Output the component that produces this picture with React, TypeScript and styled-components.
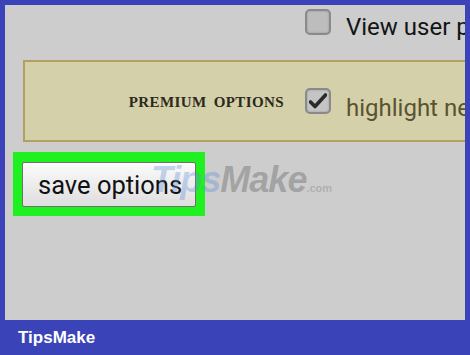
import styled, { createGlobalStyle } from 'styled-components';

const GlobalStyle = createGlobalStyle`
  html, body {
    margin: 0;
    padding: 0;
  }
  body {
    font-family: Roboto, 'Liberation Sans', sans-serif;
  }
`;

const Frame = styled.div`
  width: 470px;
  height: 355px;
  background: #3a44b8;
  display: flex;
  flex-direction: column;
  overflow: hidden;
`;

const Panel = styled.div`
  position: relative;
  margin: 5px 5px 0;
  height: 315px;
  background: #cdcdcd;
  overflow: hidden;
  display: flex;
  flex-direction: column;
`;

const OptionRow = styled.div`
  display: grid;
  grid-template-columns: 285px 26px auto;
  grid-template-rows: 34px;
  column-gap: 15px;
  align-items: center;
  white-space: nowrap;
`;

const Check = styled.span<{ $checked?: boolean }>`
  box-sizing: border-box;
  width: 26px;
  height: 26px;
  border: 2px solid #8a8a8a;
  border-radius: 5px;
  background: ${(p) => (p.$checked ? '#c4c4c4' : '#bdbdbd')};
  box-shadow: inset 0 0 2px rgba(0, 0, 0, 0.25);
  display: flex;
  align-items: center;
  justify-content: center;
`;

const OptionLabel = styled.span<{ $tone?: string; $drop?: number }>`
  font-size: 24px;
  color: ${(p) => p.$tone || '#141414'};
  line-height: 32px;
  padding-top: ${(p) => p.$drop ?? 0}px;
`;

const PremiumBox = styled.div`
  margin: 21px 0 0 18px;
  height: 82px;
  box-sizing: border-box;
  border: 2px solid #b59f5e;
  border-right: none;
  background: #d4d0a9;
  display: grid;
  grid-template-columns: 265px 26px auto;
  column-gap: 15px;
  align-items: center;
  white-space: nowrap;
`;

const PremiumTitle = styled.span`
  justify-self: end;
  padding: 2px 6px 0 0;
  font-family: 'Liberation Serif', 'DejaVu Serif', serif;
  font-weight: bold;
  font-size: 15px;
  letter-spacing: 0.4px;
  word-spacing: 3px;
  color: #2b2a1c;
`;

const SaveArea = styled.div`
  margin: 10px 0 0 8px;
  align-self: flex-start;
  padding: 10px 9px 9px;
  background: #1ff01f;
`;

const SaveButton = styled.button`
  box-sizing: border-box;
  width: 174px;
  height: 45px;
  border: 1px solid #707070;
  border-radius: 2px;
  background: linear-gradient(#fbfbfb, #dedede);
  font-family: Roboto, 'Liberation Sans', sans-serif;
  font-size: 25.5px;
  color: #111;
  padding: 0 0 0 15px;
  text-align: left;
  cursor: pointer;
`;

const Watermark = styled.div`
  position: absolute;
  left: 146px;
  top: 154px;
  font-family: 'Liberation Sans', Arial, sans-serif;
  font-weight: bold;
  font-style: italic;
  font-size: 36px;
  letter-spacing: -1px;
  pointer-events: none;
  white-space: nowrap;
`;

const MarkPart = styled.span<{ $color: string; $small?: boolean }>`
  color: ${(p) => p.$color};
  font-size: ${(p) => (p.$small ? '11px' : 'inherit')};
  font-style: ${(p) => (p.$small ? 'normal' : 'italic')};
  letter-spacing: ${(p) => (p.$small ? '0' : 'inherit')};
`;

const Footer = styled.div`
  flex: 1;
  display: flex;
  align-items: center;
  padding-left: 18px;
  font-family: 'Liberation Sans', Arial, sans-serif;
  font-weight: bold;
  font-size: 17px;
  color: #fff;
`;

const CheckMark = () => (
  <svg width="18" height="16" viewBox="0 0 18 16">
    <path d="M1.5 9 L6 13.5 L16.5 2" fill="none" stroke="#2a2a2a" strokeWidth="3.6" strokeLinecap="round" strokeLinejoin="round" />
  </svg>
);

export default function App() {
  return (
    <Frame>
      <GlobalStyle />
      <Panel>
        <OptionRow>
          <span />
          <Check />
          <OptionLabel $drop={10}>View user preferences</OptionLabel>
        </OptionRow>
        <PremiumBox>
          <PremiumTitle>PREMIUM OPTIONS</PremiumTitle>
          <Check $checked>
            <CheckMark />
          </Check>
          <OptionLabel $tone="#5a532f" $drop={14}>highlight new posts</OptionLabel>
        </PremiumBox>
        <SaveArea>
          <SaveButton type="button">save options</SaveButton>
        </SaveArea>
        <Watermark>
          <MarkPart $color="rgba(95, 140, 215, 0.35)">Tips</MarkPart>
          <MarkPart $color="rgba(110, 110, 110, 0.45)">Make</MarkPart>
          <MarkPart $color="rgba(130, 130, 130, 0.4)" $small>.com</MarkPart>
        </Watermark>
      </Panel>
      <Footer>TipsMake</Footer>
    </Frame>
  );
}
